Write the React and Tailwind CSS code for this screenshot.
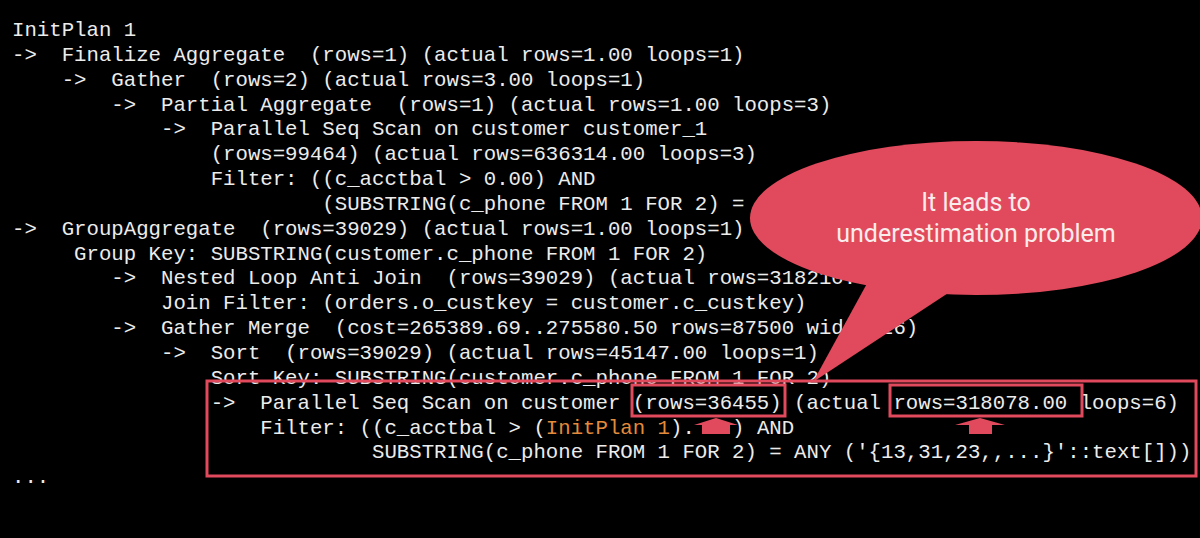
const lines = [
  'InitPlan 1',
  '->  Finalize Aggregate  (rows=1) (actual rows=1.00 loops=1)',
  '    ->  Gather  (rows=2) (actual rows=3.00 loops=1)',
  '        ->  Partial Aggregate  (rows=1) (actual rows=1.00 loops=3)',
  '            ->  Parallel Seq Scan on customer customer_1',
  '                (rows=99464) (actual rows=636314.00 loops=3)',
  '                Filter: ((c_acctbal > 0.00) AND',
  '                         (SUBSTRING(c_phone FROM 1 FOR 2) = ANY',
  '->  GroupAggregate  (rows=39029) (actual rows=1.00 loops=1)',
  '     Group Key: SUBSTRING(customer.c_phone FROM 1 FOR 2)',
  '        ->  Nested Loop Anti Join  (rows=39029) (actual rows=318210.00 loops=1)',
  '            Join Filter: (orders.o_custkey = customer.c_custkey)',
  '        ->  Gather Merge  (cost=265389.69..275580.50 rows=87500 width=26)',
  '            ->  Sort  (rows=39029) (actual rows=45147.00 loops=1)',
  '                Sort Key: SUBSTRING(customer.c_phone FROM 1 FOR 2)',
  '                ->  Parallel Seq Scan on customer (rows=36455) (actual rows=318078.00 loops=6)',
];

const RED = '#e04a5c';

const Annotations = () => (
  <svg className="absolute inset-0" width="1200" height="538" viewBox="0 0 1200 538">
    {/* speech bubble */}
    <ellipse cx="976" cy="218" rx="226" ry="77" fill={RED} />
    <polygon points="813,382 870,278 971,278" fill={RED} />

    {/* highlight boxes */}
    <rect x="207" y="381" width="989" height="95" fill="none" stroke={RED} strokeWidth="3" />
    <rect x="632" y="385" width="153" height="31" fill="none" stroke={RED} strokeWidth="3" />
    <rect x="890" y="385" width="192" height="31" fill="none" stroke={RED} strokeWidth="3" />

    {/* up arrows */}
    <polygon points="694,425 716,418 738,425 730,425 730,434 702,434 702,425" fill={RED} />
    <polygon points="955,425 980,418 1005,425 992,425 992,434 969,434 969,425" fill={RED} />
  </svg>
);

export default function App() {
  return (
    <div className="relative w-[1200px] h-[538px] overflow-hidden bg-black">
      <div className="pl-[12px] pt-[19px] font-['Liberation_Mono',monospace] text-[20.7px] leading-[24.85px] text-[#ececec] whitespace-pre">
        {lines.map((l, i) => (
          <div key={i}>{l}</div>
        ))}
        <div>
          {'                    Filter: ((c_acctbal > ('}
          <span className="text-[#e38b3b]">InitPlan 1</span>
          {').   ) AND'}
        </div>
        <div>{"                             SUBSTRING(c_phone FROM 1 FOR 2) = ANY ('{13,31,23,,...}'::text[]))"}</div>
        <div>...</div>
      </div>

      <Annotations />

      <div className="absolute left-[750px] top-[187px] w-[452px] text-center font-['Roboto',sans-serif] text-[25px] leading-[31px] text-[#fbecec]">
        <div>It leads to</div>
        <div>underestimation problem</div>
      </div>
    </div>
  );
}
